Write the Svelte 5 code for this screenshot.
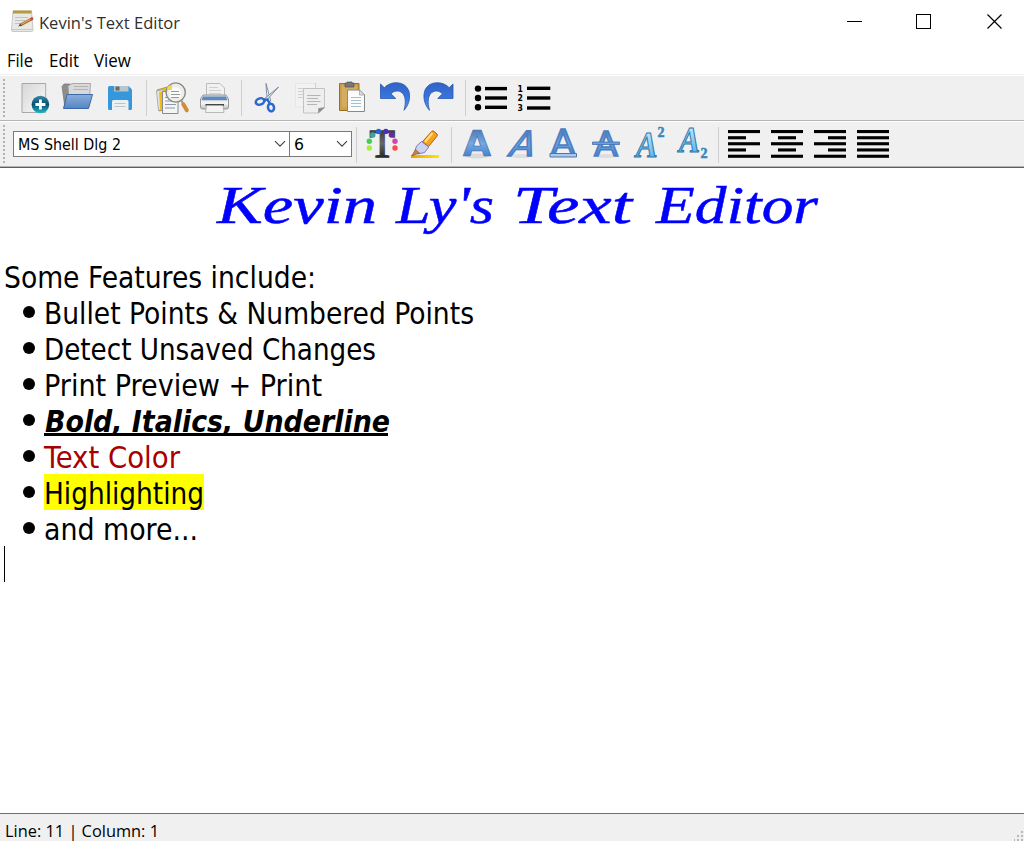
<script>
  const ui = "'Open Sans', 'Noto Sans', sans-serif";
  const doc = "'DejaVu Sans Condensed', 'DejaVu Sans', sans-serif";

  const fileTools = [
    { sep: false, items: [['new', 13], ['open', 56], ['save', 99]] },
    { sep: true, items: [['preview', 151], ['print', 194]] },
    { sep: true, items: [['cut', 246], ['copy', 289], ['paste', 332], ['undo', 375], ['redo', 418]] },
    { sep: true, items: [['bullets', 470], ['numbers', 513]] }
  ];
  const formatTools = [
    { sep: true, items: [['color', 361], ['highlight', 404]] },
    { sep: true, items: [['bold', 456], ['italic', 499], ['underline', 542], ['strike', 585], ['super', 628], ['sub', 671]] },
    { sep: true, items: [['left', 723], ['center', 766], ['right', 809], ['justify', 852]] }
  ];
  const dots = [
    [369.3, 148, '#a4f03c'], [369.3, 141.3, '#3fd24a'], [372.8, 135, '#35a5a8'], [378.6, 131.4, '#2b62d0'],
    [385.8, 131.4, '#4632c0'], [391.4, 135, '#6a2a9e'], [395, 141.3, '#d044b4'], [395, 148, '#ff4848']
  ];
  const alignLines = {
    left: [728, 760, 728, 746],
    center: [771, 803, 778, 796],
    right: [814, 846, 828, 846],
    justify: [857, 889, 857, 889]
  };
  const alignY = [130, 136.2, 142.2, 148.4, 154.7];

  const heading = [
    ['Kevin', 6, 160],
    ['Ly\'s', 185, 98],
    ['Text', 302, 119],
    ['Editor', 445, 162]
  ];

  const lines = [
    { text: 'Bullet Points & Numbered Points', w: 430 },
    { text: 'Detect Unsaved Changes', w: 332 },
    { text: 'Print Preview + Print', w: 278 },
    { text: 'Bold, Italics, Underline', w: 345, kind: 'strong' },
    { text: 'Text Color', w: 136, kind: 'red' },
    { text: 'Highlighting', w: 160, kind: 'mark' },
    { text: 'and more...', w: 154 }
  ];
</script>

{#snippet label(text, w, h, base, size, font, color)}
  <svg class="label" width={w} height={h}>
    <text x="0" y={base} font-family={font} font-size={size} fill={color} textLength={w} lengthAdjust="spacingAndGlyphs">{text}</text>
  </svg>
{/snippet}

{#snippet icon(name, x, y)}
  <svg width="43" height="44" viewBox="{x} {y} 43 44">
    {#if name === 'new'}
      <path d="M22 83.5H45.7V112.5H22Z" fill="url(#paper)" stroke="#a9a9a9" />
      <circle cx="40.4" cy="104.5" r="8.8" fill="url(#teal)" />
      <path d="M40.4 99.5V109.5M35.4 104.5H45.4" stroke="#fff" stroke-width="2.8" />
    {:else if name === 'open'}
      <path d="M62 86.5L64 84H70L72 86H87V108H65Z" fill="#8d8d8d" stroke="#777" stroke-width=".7" />
      <path d="M68 86L72 83.5H90.5L89.5 98H69Z" fill="#d9d9d9" stroke="#999" stroke-width=".8" />
      <path d="M74 86.5H88M73.500 89.500H88" stroke="#b3b3b3" />
      <path d="M67 94.500H92.500L88.500 108.500H63.500Z" fill="url(#folder)" stroke="#3c68a8" stroke-width="1" />
    {:else if name === 'save'}
      <path d="M109.500 86H128.500L132 89.500V108.500Q132 110 130.500 110H109.500Q108 110 108 108.500V87.500Q108 86 109.500 86Z" fill="#3697dc" />
      <path d="M114 86H128.500V91.500H114Z" fill="#b8c6ca" />
      <path d="M115.500 86.500H119.500V90.500H115.500Z" fill="#626b70" />
      <path d="M112 110V101.500Q112 100 113.500 100H127Q128.500 100 128.500 101.500V110Z" fill="#edf0f1" />
      <path d="M114.500 103.500H125.500M114.500 106.500H125.500" stroke="#b9c3c8" />
    {:else if name === 'preview'}
      <path d="M157 90L174 85L177 107L159 111Z" fill="#f2c21c" stroke="#a88822" stroke-width=".8" />
      <path d="M156.500 91L163 89.500V109.500L158.500 110.500Z" fill="#e6e6e6" stroke="#999" stroke-width=".7" />
      <path d="M159 92L163 91V109L160 110Z" fill="#f2bd12" />
      <path d="M162.500 91.500H178V113.500H162.500Z" fill="#f4f4f4" stroke="#898989" />
      <path d="M165 97.500H175M165 101H176M165 104.500H176M165 108H175" stroke="#8d99a4" />
      <path d="M181 100L187 110" stroke="#999" stroke-width="2" />
      <path d="M183.300 104.300L186.800 110.300" stroke="#d28a35" stroke-width="4" stroke-linecap="round" />
      <circle cx="175.700" cy="92.500" r="9.600" fill="#eeeee9" stroke="#888" stroke-width="1.400" />
      <path d="M170 87.500H178L181 91V98H170Z" fill="#fbfbfb" />
      <path d="M167.500 86.500L172 84.500V90H167Z" fill="#f4d45c" />
      <path d="M171 91.500H179M171 94.500H180M171 97.500H179" stroke="#999" />
    {:else if name === 'print'}
      <path d="M206.500 83.500H220L224.500 88V98H206.500Z" fill="#f1f1f1" stroke="#bbb" />
      <path d="M209 87.500H218M209 90.500H221M209 93.500H221" stroke="#cfcfcf" />
      <path d="M203 95H226L228.500 99V107Q228.500 109 226.500 109H202.500Q200.500 109 200.500 107V99Z" fill="url(#metal)" stroke="#8f8f8f" stroke-width=".9" />
      <path d="M203 96.500H226L227.500 100.300H201.500Z" fill="#5f8abd" />
      <path d="M205.500 105H224" stroke="#333" stroke-width="1.800" />
      <path d="M206.500 105.500H223L224 112.500H205.500Z" fill="#f3f3f3" stroke="#aaa" stroke-width=".8" />
    {:else if name === 'cut'}
      <path d="M266 83.500L270.800 101L268 102Q266 94 266 83.500Z" fill="#e9edf2" stroke="#76879b" stroke-width=".9" />
      <path d="M278.500 87L265 102L263.500 99.500Z" fill="#dce3ea" stroke="#76879b" stroke-width=".9" />
      <ellipse cx="260" cy="101.500" rx="4.300" ry="3.100" transform="rotate(-20 260 101.500)" fill="none" stroke="#2c68cf" stroke-width="2.500" />
      <ellipse cx="271" cy="107.500" rx="3" ry="3.800" transform="rotate(-15 271 107.500)" fill="none" stroke="#2c68cf" stroke-width="2.500" />
      <path d="M263.500 100L267.500 99.500L270 104" fill="none" stroke="#2c68cf" stroke-width="2.300" />
    {:else if name === 'copy'}
      <path d="M295.500 83.500H315.500V107H295.500Z" fill="#f2f2f2" stroke="#e6e6e6" />
      <path d="M298 88.500H305M298 91.500H303M298 94.500H303M298 97.500H303M315.500 83V88" stroke="#cfcfcf" />
      <path d="M303.500 88.500H324.500V107L318.500 113H303.500Z" fill="#eeeeee" stroke="#c2c2c2" />
      <path d="M307 95.500H320.500M307 98.500H318M307 101.500H320.500M307 104.500H317" stroke="#b5b5b5" />
      <path d="M324.500 107.500L318.500 113V108.500Z" fill="#888" stroke="#999" stroke-width=".7" />
    {:else if name === 'paste'}
      <path d="M339.500 83.500H359V110.500H339.500Z" fill="#cda04d" stroke="#9b6d1d" />
      <path d="M342 86H357V107H342Z" fill="#d5ad62" />
      <path d="M345 83H347V82H352V83H354V87H345Z" fill="#777" stroke="#555" stroke-width=".7" />
      <path d="M347.500 90H359.500L364.500 95V111.500H347.500Z" fill="#fbfbfb" stroke="#888" />
      <path d="M359.500 90V95H364.500Z" fill="#dedede" stroke="#999" stroke-width=".7" />
      <path d="M351 97.500H361M351 100.500H361M351 103.500H361M351 106.500H361" stroke="#a4bdcf" />
    {:else if name === 'undo' || name === 'redo'}
      <path transform={name === 'redo' ? 'translate(833.5 0) scale(-1 1)' : undefined} d="M380.500 98.500V84L384.300 87.700C391 80.500 405.500 80.500 409 91.500C411 99.500 407.500 106.500 404 110.300C406.300 102.500 406 93.500 399.500 91.300C396 90.300 393 91.700 391 93.800L395.800 98.500Z" fill="url(#arrow)" stroke="#2355ae" stroke-width=".8" />
    {:else if name === 'bullets'}
      {#each [88.6, 98, 107.3] as cy}
        <circle cx="478" {cy} r="3.200" />
        <path d="M485 {cy}H507" stroke="#000" stroke-width="3.400" />
      {/each}
    {:else if name === 'numbers'}
      {#each [88.3, 98, 108] as cy, i}
        <text x="517.500" y={cy + 3.200} font-family="DejaVu Sans Condensed" font-weight="bold" font-size="8.600">{i + 1}</text>
        <path d="M527 {cy}H550.300" stroke="#000" stroke-width="3.400" />
      {/each}
    {:else if name === 'color'}
      <text x="369.500" y="157" font-family="Liberation Serif" font-size="40.500" textLength="25.500" lengthAdjust="spacingAndGlyphs" fill="url(#dark)" stroke="url(#dark)" stroke-width="1.300">T</text>
      {#each dots as [cx, cy, fill]}
        <circle {cx} {cy} r="2.700" {fill} />
      {/each}
    {:else if name === 'highlight'}
      <path d="M411 155H439V158H411Z" fill="url(#gold)" />
      <path d="M431.800 131.300Q433 130.500 434.200 131.500L437 134Q437.800 135 437 136.200L428.500 146.500L422.500 141.700Z" fill="#f7a31b" stroke="#b8571c" />
      <path d="M432.500 133L425 142" stroke="#ffe07a" stroke-width="2" />
      <path d="M421.500 141.500L428.800 147L424.500 152.500L418 154L415 151L416.500 146Z" fill="#cdd2f1" stroke="#6d73b4" stroke-width=".9" />
      <path d="M415.500 149.500L419.500 153L411.800 155.800Z" fill="#c58438" stroke="#79502a" stroke-width=".6" />
    {:else if name === 'bold'}
      <ellipse cx="477" cy="156" rx="12" ry="2.500" fill="#d9d9d9" />
      <text class="blue" x="463" y="156" font-family="DejaVu Sans" font-weight="bold" font-size="35.500" textLength="28" lengthAdjust="spacingAndGlyphs">A</text>
    {:else if name === 'italic'}
      <ellipse cx="521" cy="156" rx="10" ry="2" fill="#dedede" />
      <text class="blue mid" transform="translate(507 156) skewX(-20)" x="0" y="0" font-family="DejaVu Sans" font-size="34.500" textLength="24.500" lengthAdjust="spacingAndGlyphs">A</text>
    {:else if name === 'underline'}
      <text class="blue mid" x="551" y="153.500" font-family="DejaVu Sans" font-size="33" textLength="24" lengthAdjust="spacingAndGlyphs">A</text>
      <path d="M550 153.500H576.500V157H550Z" fill="#a9c8ec" stroke="#4678b3" />
    {:else if name === 'strike'}
      <ellipse cx="606" cy="156" rx="11" ry="2" fill="#dedede" />
      <text class="blue mid" x="594" y="155.500" font-family="DejaVu Sans" font-size="34" textLength="24" lengthAdjust="spacingAndGlyphs">A</text>
      <path d="M592.500 142H619.500V144.500H592.500Z" fill="#6c9fdb" stroke="#4470ae" stroke-width=".8" />
    {:else if name === 'super'}
      <text class="sky" x="636" y="157" font-family="Liberation Serif" font-style="italic" font-weight="bold" font-size="36" textLength="21.500" lengthAdjust="spacingAndGlyphs">A</text>
      <text class="two" x="657.500" y="137">2</text>
    {:else if name === 'sub'}
      <text class="sky" x="679" y="152.300" font-family="Liberation Serif" font-style="italic" font-weight="bold" font-size="36" textLength="21" lengthAdjust="spacingAndGlyphs">A</text>
      <text class="two" x="700.500" y="158">2</text>
    {:else}
      {@const a = alignLines[name]}
      {#each alignY as ly, i}
        {@const k = i % 2 ? 2 : 0}
        <rect x={a[k]} y={ly} width={a[k + 1] - a[k]} height="3.100" />
      {/each}
    {/if}
  </svg>
{/snippet}

{#snippet groups(list, y)}
  {#each list as g}
    {#if g.sep}<i class="sep"></i>{/if}
    {#each g.items as [name, x]}
      <button aria-label={name}>{@render icon(name, x, y)}</button>
    {/each}
  {/each}
{/snippet}

<svg class="defs" width="0" height="0">
  <defs>
    <linearGradient id="paper" x2="1" y2="1"><stop stop-color="#d6d6d6" /><stop offset="1" stop-color="#fafafa" /></linearGradient>
    <linearGradient id="teal" x2="0" y2="1"><stop stop-color="#3a86a4" /><stop offset=".5" stop-color="#07506f" /><stop offset="1" stop-color="#20bccb" /></linearGradient>
    <linearGradient id="folder" x2="0" y2="1"><stop stop-color="#8aaedb" /><stop offset="1" stop-color="#5585c4" /></linearGradient>
    <linearGradient id="metal" x2="0" y2="1"><stop stop-color="#d8d8d8" /><stop offset=".6" stop-color="#f5f5f5" /><stop offset="1" stop-color="#bcbcbc" /></linearGradient>
    <linearGradient id="arrow" x2="0" y2="1"><stop stop-color="#3262c4" /><stop offset=".5" stop-color="#3873dc" /><stop offset="1" stop-color="#5b9af0" /></linearGradient>
    <linearGradient id="dark" x2="0" y2="1"><stop stop-color="#222" /><stop offset=".5" stop-color="#666" /><stop offset="1" stop-color="#000" /></linearGradient>
    <linearGradient id="gold"><stop stop-color="#f09a10" /><stop offset="1" stop-color="#ffe800" /></linearGradient>
    <linearGradient id="blueA" x2="0" y2="1"><stop offset=".2" stop-color="#5380bd" /><stop offset=".5" stop-color="#78a7df" /><stop offset=".8" stop-color="#4784cf" /></linearGradient>
    <linearGradient id="skyA" x2="0" y2="1"><stop offset=".2" stop-color="#bce6fb" /><stop offset=".8" stop-color="#5eb5ee" /></linearGradient>
  </defs>
</svg>

<div class="window">
  <header>
    <svg class="app" width="24" height="24" viewBox="11 9 24 24">
      <path d="M13 11H31.500L33 30Q33 31.500 31.500 31.500H13Q11.500 31.500 11.500 30Z" fill="#e8e8e7" stroke="#bcbcbc" stroke-width=".8" />
      <path d="M13 10.500H31.500V13.500H13Z" fill="#b39b42" />
      <path d="M15 17.500H28M15 20.500H25M15 23.500H21" stroke="#bdbdbd" stroke-width=".9" />
      <path d="M11.800 29.500H32.700" stroke="#c8c8c8" />
      <path d="M20 25.300L31.500 19" stroke="#a66e22" stroke-width="3" />
      <path d="M20.500 24.700L30.500 19.200" stroke="#e3ac58" stroke-width="1.200" />
      <path d="M30.500 19.500L33 18.200" stroke="#cf4b43" stroke-width="3" />
      <path d="M18 26.400L20.800 23.700L21.700 25.500Z" fill="#4b3f33" />
    </svg>
    {@render label("Kevin's Text Editor", 141, 24, 20, 17, ui, '#303030')}
    <svg class="controls" width="160" height="22" viewBox="845 11 160 22" fill="none" stroke="#000" shape-rendering="crispEdges">
      <path d="M847 21.500H862M916.500 14.500H930.500V28.500H916.500Z" />
      <path d="M987.500 14.500L1001.500 28.500M1001.500 14.500L987.500 28.500" shape-rendering="auto" stroke-width="1.200" />
    </svg>
  </header>
  <nav>
    {@render label('File', 26, 28, 21, 17.5, ui, '#000')}
    {@render label('Edit', 30, 28, 21, 17.5, ui, '#000')}
    {@render label('View', 37, 28, 21, 17.5, ui, '#000')}
  </nav>
  <div class="toolbar first">
    <i class="grip"></i>
    {@render groups(fileTools, 76)}
  </div>
  <div class="toolbar second">
    <i class="grip"></i>
    <div class="combo family">
      {@render label('MS Shell Dlg 2', 103, 24, 17.500, 16.5, doc, '#000')}
      <svg width="12" height="8" viewBox="0 0 12 8"><path d="M1 1.200L6 6.200L11 1.200" fill="none" stroke="#444" stroke-width="1.200" /></svg>
    </div>
    <div class="combo size">
      {@render label('6', 10, 24, 17.500, 16.5, doc, '#000')}
      <svg width="12" height="8" viewBox="0 0 12 8"><path d="M1 1.200L6 6.200L11 1.200" fill="none" stroke="#444" stroke-width="1.200" /></svg>
    </div>
    {@render groups(formatTools, 122)}
  </div>
  <main>
    <h1>
      <svg width="612" height="90" font-family="'Lucida Calligraphy', 'Liberation Serif', serif" font-style="italic" font-size="52" fill="#00f" stroke="#00f" stroke-width=".5">
        {#each heading as [word, x, w]}
          <text {x} y="55" textLength={w} lengthAdjust="spacingAndGlyphs">{word}</text>
        {/each}
      </svg>
    </h1>
    <p>{@render label('Some Features include:', 312, 36, 30, 30, doc, '#000')}</p>
    <ul>
      {#each lines as l}
        <li>
          <span class="dot"></span>
          <span class="line {l.kind ?? ''}">{@render label(l.text, l.w, 36, 30, 30, doc, l.kind === 'red' ? '#a80000' : '#000')}</span>
        </li>
      {/each}
    </ul>
    <div class="caret"></div>
  </main>
  <footer>
    {@render label('Line: 11 | Column: 1', 154, 27, 23, 17, ui, '#000')}
    <svg width="10" height="10" viewBox="0 0 10 10" fill="#b8b8b8">
      <path d="M7 0h2v2h-2zM7 4h2v2h-2zM3 4h2v2h-2zM7 8h2v2h-2zM3 8h2v2h-2zM0 8h1v2h-1z" />
    </svg>
  </footer>
</div>

<style>
  :global(body) { margin: 0; background: #fff; }
  svg { display: block; flex: none; overflow: visible; }
  .defs { position: absolute; }
  .window { width: 1024px; height: 841px; display: flex; flex-direction: column; overflow: hidden; background: #fff; }
  header { height: 46px; display: flex; align-items: flex-start; padding: 9px 19px 0 11px; box-sizing: border-box; }
  header .label { margin-left: 4px; }
  .controls { margin: 2px 0 0 auto; }
  nav { height: 28px; display: flex; gap: 15.500px; padding-left: 7px; }
  .toolbar { box-sizing: border-box; display: flex; background: #f0f0f0; height: 47px; }
  .first { border-top: 1px solid #f0f0f0; border-bottom: 1px solid #b4b4b4; box-shadow: inset 0 1px #fff; padding-top: 1px; }
  .second { border-top: 1px solid #fff; border-bottom: 1px solid #b4b4b4; height: 46px; }
  .grip { width: 3px; height: 38px; margin: 3px 7px 0 3px; background: radial-gradient(circle at 1px 1px, #b4b4b4 1px, transparent 1.4px) 0 0 / 3px 4px; }
  .sep { width: 1px; height: 36px; margin: 4px 4px 0; background: #cfcfcf; }
  .second .sep { margin-top: 5px; }
  button { width: 43px; height: 44px; padding: 0; border: 0; background: none; flex: none; }
  .combo { box-sizing: border-box; height: 26px; margin-top: 9px; border: 1px solid #7a7a7a; background: #fff; display: flex; align-items: center; justify-content: space-between; padding: 0 3px 0 4px; }
  .family { width: 277px; }
  .size { width: 63px; margin-left: -1px; }
  main { flex: 1; border-top: 1px solid #1b6fb3; background: #fff; }
  h1 { margin: 0; height: 90px; display: flex; padding-left: 211px; font-weight: 400; }
  p { margin: 0; padding-left: 4px; }
  ul { list-style: none; margin: 0; padding: 0; }
  li { height: 36px; display: flex; align-items: flex-start; }
  .dot { width: 12px; height: 12px; border-radius: 50%; background: #000; margin: 12px 9px 0 23px; }
  .line { height: 36px; }
  .mark { background: #ff0; }
  .strong { font-weight: bold; font-style: italic; background: linear-gradient(#000, #000) 0 31px / 344px 3px no-repeat; }
  .strong svg { margin-left: 1px; }
  .caret { width: 1px; height: 36px; background: #000; margin-left: 4px; }
  footer { height: 27px; border-top: 1px solid #6f6f6f; background: #f0f0f0; display: flex; align-items: flex-end; justify-content: space-between; padding-left: 5px; }
  .blue { fill: url(#blueA); stroke: #4272b2; stroke-width: .7; }
  .mid { stroke: #4b7fc2; stroke-width: 1.6; }
  .sky { fill: url(#skyA); stroke: #2d74a9; stroke-width: 1.1; }
  .two { font: bold 14px 'Liberation Serif', serif; fill: #3487bd; stroke: #3487bd; stroke-width: .5; }
</style>
